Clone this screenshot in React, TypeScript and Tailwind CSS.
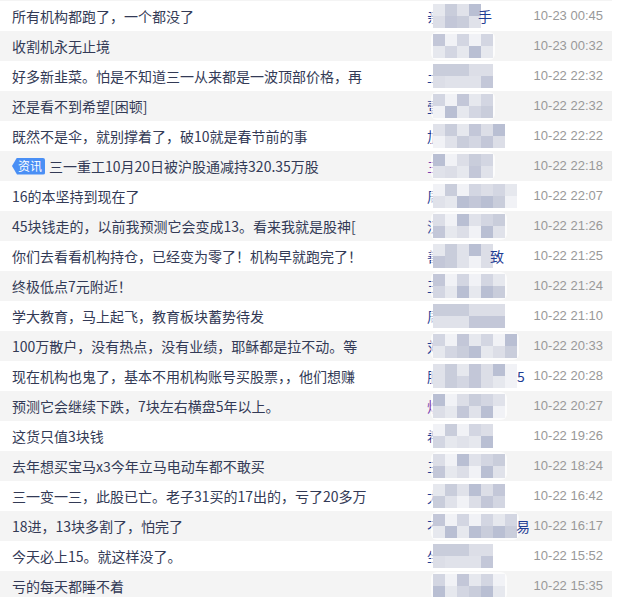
import React from 'react';

type Post = {
  title: string;
  tag?: string;
  first: string;
  last?: string;
  lastX?: number;
  purple?: boolean;
  cols: number;
  time: string;
};

const posts: Post[] = [
  { title: '所有机构都跑了，一个都没了', first: '亲', last: '手', lastX: 51, cols: 4, time: '10-23 00:45' },
  { title: '收割机永无止境', first: '', cols: 5, time: '10-23 00:32' },
  { title: '好多新韭菜。怕是不知道三一从来都是一波顶部价格，再', first: '土', cols: 5, time: '10-22 22:32' },
  { title: '还是看不到希望[困顿]', first: '壹', cols: 5, time: '10-22 22:32' },
  { title: '既然不是伞，就别撑着了，破10就是春节前的事', first: '加', cols: 6, time: '10-22 22:22' },
  { title: '三一重工10月20日被沪股通减持320.35万股', tag: '资讯', first: '三', purple: true, cols: 5, time: '10-22 22:18' },
  { title: '16的本坚持到现在了', first: '周', cols: 7, time: '10-22 22:07' },
  { title: '45块钱走的，以前我预测它会变成13。看来我就是股神[', first: '汉', cols: 6, time: '10-22 21:26' },
  { title: '你们去看看机构持仓，已经变为零了！机构早就跑完了！', first: '善', last: '致', lastX: 63, cols: 5, time: '10-22 21:25' },
  { title: '终极低点7元附近！', first: '王', cols: 6, time: '10-22 21:24' },
  { title: '学大教育，马上起飞，教育板块蓄势待发', first: '周', cols: 6, time: '10-22 21:10' },
  { title: '100万散户，没有热点，没有业绩，耶稣都是拉不动。等', first: '刘', cols: 7, time: '10-22 20:33' },
  { title: '现在机构也鬼了，基本不用机构账号买股票，，他们想赚', first: '股', last: '5', lastX: 90, cols: 7, time: '10-22 20:28' },
  { title: '预测它会继续下跌，7块左右横盘5年以上。', first: '炽', purple: true, cols: 6, time: '10-22 20:27' },
  { title: '这货只值3块钱', first: '希', cols: 5, time: '10-22 19:26' },
  { title: '去年想买宝马x3今年立马电动车都不敢买', first: '三', cols: 6, time: '10-22 18:24' },
  { title: '三一变一三，此股已亡。老子31买的17出的，亏了20多万', first: '尤', cols: 6, time: '10-22 16:42' },
  { title: '18进，13块多割了，怕完了', first: '不', last: '易', lastX: 89, cols: 7, time: '10-22 16:17' },
  { title: '今天必上15。就这样没了。', first: '坐', cols: 5, time: '10-22 15:52' },
  { title: '亏的每天都睡不着', first: '', cols: 6, time: '10-22 15:35' },
];

const shades = ['#dcdee7', '#c9cddb', '#b9bfd3', '#e6e8ee', '#d3d6e2', '#f1f2f6', '#c3c7d8', '#e0e2ea'];

function Mosaic({ cols, seed }: { cols: number; seed: number }) {
  const cells: string[] = [];
  for (let i = 0; i < cols * 2; i++) {
    cells.push(shades[(i * 5 + seed * 3 + (i % 3) * seed) % shades.length]);
  }
  return (
    <div className="absolute left-[4px] top-[1px] rounded-[6px] bg-white/70 p-[2px]">
      <div className="grid" style={{ gridTemplateColumns: `repeat(${cols}, 12px)` }}>
        {cells.map((c, i) => (
          <div key={i} className="h-[12px] w-[12px]" style={{ backgroundColor: c }} />
        ))}
      </div>
    </div>
  );
}

export default function App() {
  return (
    <div
      className="h-[597px] w-[624px] overflow-hidden bg-white"
      style={{ fontFamily: '"Noto Sans CJK SC", "Liberation Sans", sans-serif' }}
    >
      <div className="h-px w-[612px] bg-[#f4f4f4]" />
      {posts.map((p, i) => (
        <div
          key={i}
          className={`flex h-[30px] w-[612px] items-center text-[14px] ${i % 2 ? 'bg-[#f4f4f4]' : 'bg-white'}`}
        >
          <div className="flex w-[427px] items-center overflow-hidden whitespace-nowrap pl-3 text-[#333a56]">
            {p.tag && (
              <span className="mr-[4px] flex h-[17px] items-center rounded-r-[2px] bg-[#4a8ff5] pl-[6px] pr-[3px] text-[12px] leading-none text-white [clip-path:polygon(5px_0,100%_0,100%_100%,5px_100%,0_50%)]">
                {p.tag}
              </span>
            )}
            <span>{p.title}</span>
          </div>
          <div className="relative flex h-full w-[100px] items-center">
            <span className={p.purple ? 'text-[#7a3fb0]' : 'text-[#1f3e94]'}>{p.first}</span>
            <Mosaic cols={p.cols} seed={i + 1} />
            {p.last && (
              <span className="absolute text-[#1f3e94]" style={{ left: p.lastX }}>
                {p.last}
              </span>
            )}
          </div>
          <div
            className="flex-1 pr-[9px] text-right text-[13px] text-[#999]"
            style={{ fontFamily: '"Liberation Sans", sans-serif' }}
          >
            {p.time}
          </div>
        </div>
      ))}
    </div>
  );
}
